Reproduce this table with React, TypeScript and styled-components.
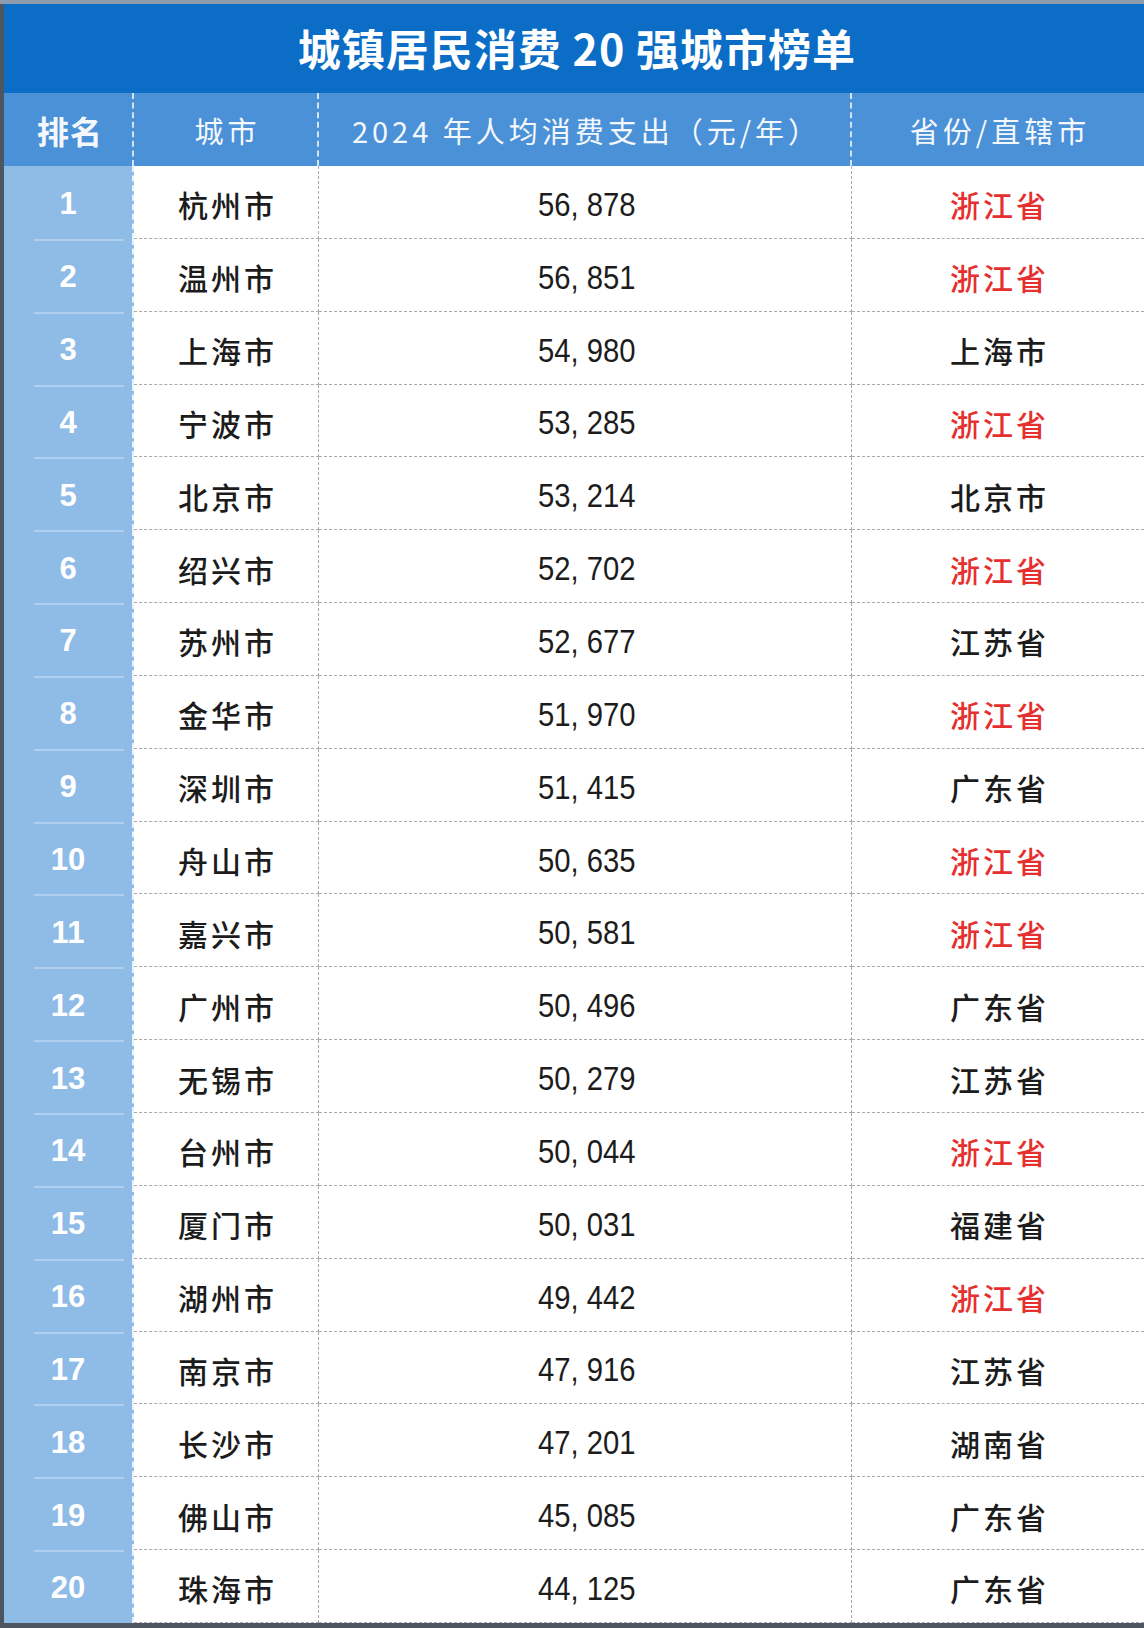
import React from "react";
import styled, { createGlobalStyle } from "styled-components";

const Global = createGlobalStyle`
  html, body { margin: 0; padding: 0; }
  body {
    background: #4d5660;
    font-family: "Noto Sans CJK SC", "Noto Sans", sans-serif;
  }
`;

const Page = styled.div`
  width: 1144px;
  height: 1628px;
  box-sizing: border-box;
  padding: 4px 0 0 4px;
  background: linear-gradient(#8c9cae 0 4px, #4d5660 4px);
  overflow: hidden;
`;

const Board = styled.div`
  width: 1140px;
  display: flex;
  flex-direction: column;
  background: #ffffff;
`;

const TitleBar = styled.div`
  height: 89px;
  background: #0b6dc6;
  display: flex;
  align-items: center;
  justify-content: center;
  padding: 0 0 4px 6px;
  box-sizing: border-box;
  color: #ffffff;
  font-size: 43px;
  font-weight: 700;
  letter-spacing: 1px;
`;

const Grid = styled.div`
  display: grid;
  grid-template-columns: 130px 185px 533px 1fr;
`;

const HeadCell = styled.div<{ $bold?: boolean; $last?: boolean }>`
  height: 73px;
  box-sizing: border-box;
  background: #4b91d7;
  color: #f4f8fd;
  display: flex;
  align-items: center;
  justify-content: center;
  padding-left: 4px;
  font-size: ${(p) => (p.$bold ? "32px" : "29px")};
  font-weight: ${(p) => (p.$bold ? 700 : 400)};
  letter-spacing: ${(p) => (p.$bold ? "1px" : "4px")};
  border-right: ${(p) => (p.$last ? "none" : "2px dashed rgba(255,255,255,0.75)")};
`;

const RankCell = styled.div<{ $first?: boolean }>`
  position: relative;
  height: 72.85px;
  box-sizing: border-box;
  padding-top: 4px;
  background: #8fbbe7;
  color: #ffffff;
  display: flex;
  align-items: center;
  justify-content: center;
  font-family: "Liberation Sans", Arial, sans-serif;
  font-weight: 700;
  font-size: 31px;
  border-right: 2px dashed rgba(255, 255, 255, 0.8);
  &::before {
    content: "";
    display: ${(p) => (p.$first ? "none" : "block")};
    position: absolute;
    top: 0;
    left: 30px;
    right: 8px;
    height: 2px;
    background: rgba(255, 255, 255, 0.3);
  }
`;

const Cell = styled.div<{ $last?: boolean; $red?: boolean }>`
  height: 72.85px;
  box-sizing: border-box;
  display: flex;
  align-items: center;
  justify-content: center;
  color: ${(p) => (p.$red ? "#e5302f" : "#1c1c1c")};
  font-size: 30px;
  font-weight: 500;
  letter-spacing: 3px;
  padding: 5px 0 0 3px;
  border-bottom: 1px dashed #a9a9a9;
  border-right: ${(p) => (p.$last ? "none" : "1px dashed #a9a9a9")};
`;

const Amount = styled.span`
  display: inline-block;
  font-family: "Liberation Sans", Arial, sans-serif;
  font-size: 34px;
  letter-spacing: 0;
  font-weight: 400;
  color: #1c1c1c;
  transform: scaleX(0.86);
`;

type Row = [string, string, string];

const rows: Row[] = [
  ["杭州市", "56, 878", "浙江省"],
  ["温州市", "56, 851", "浙江省"],
  ["上海市", "54, 980", "上海市"],
  ["宁波市", "53, 285", "浙江省"],
  ["北京市", "53, 214", "北京市"],
  ["绍兴市", "52, 702", "浙江省"],
  ["苏州市", "52, 677", "江苏省"],
  ["金华市", "51, 970", "浙江省"],
  ["深圳市", "51, 415", "广东省"],
  ["舟山市", "50, 635", "浙江省"],
  ["嘉兴市", "50, 581", "浙江省"],
  ["广州市", "50, 496", "广东省"],
  ["无锡市", "50, 279", "江苏省"],
  ["台州市", "50, 044", "浙江省"],
  ["厦门市", "50, 031", "福建省"],
  ["湖州市", "49, 442", "浙江省"],
  ["南京市", "47, 916", "江苏省"],
  ["长沙市", "47, 201", "湖南省"],
  ["佛山市", "45, 085", "广东省"],
  ["珠海市", "44, 125", "广东省"],
];

export default function App() {
  return (
    <Page>
      <Global />
      <Board>
        <TitleBar>城镇居民消费 20 强城市榜单</TitleBar>
        <Grid>
          <HeadCell $bold>排名</HeadCell>
          <HeadCell>城市</HeadCell>
          <HeadCell>2024 年人均消费支出（元/年）</HeadCell>
          <HeadCell $last>省份/直辖市</HeadCell>
          {rows.map(([city, amount, prov], i) => (
            <React.Fragment key={city}>
              <RankCell $first={i === 0}>{i + 1}</RankCell>
              <Cell>{city}</Cell>
              <Cell>
                <Amount>{amount}</Amount>
              </Cell>
              <Cell $last $red={prov === "浙江省"}>
                {prov}
              </Cell>
            </React.Fragment>
          ))}
        </Grid>
      </Board>
    </Page>
  );
}
